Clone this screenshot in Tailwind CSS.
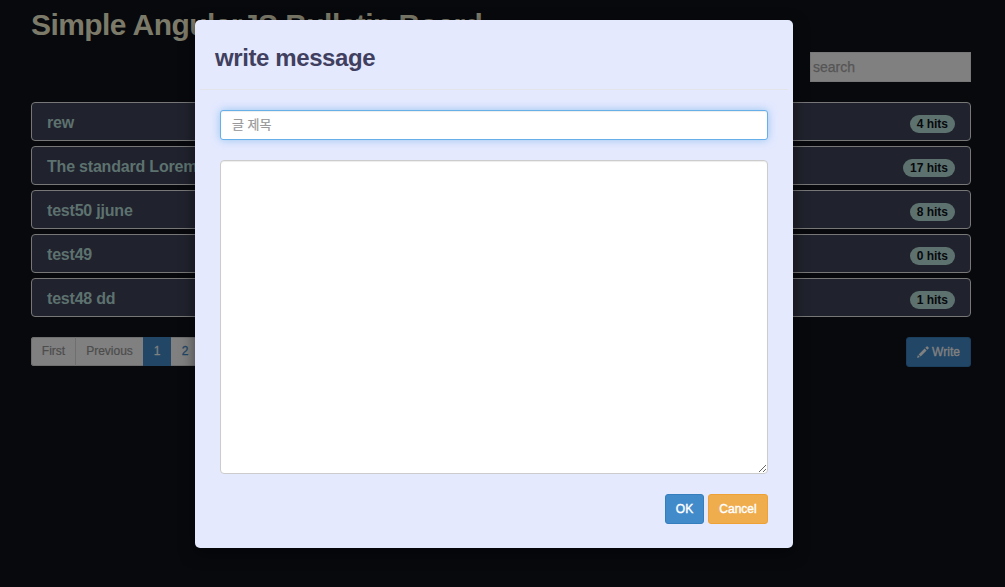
<!DOCTYPE html>
<html lang="en">
<head>
<meta charset="utf-8">
<title>Simple AngularJS Bulletin Board</title>
<script src="https://cdn.jsdelivr.net/npm/@tailwindcss/browser@4"></script>
</head>
<body class="relative h-[587px] overflow-hidden bg-[#07090d] font-['Liberation_Sans','Noto_Sans_CJK_KR',sans-serif]">
<main class="flex flex-col pl-[31px] pr-[34px] pt-2">
  <h1 class="h-11 text-[30px] leading-[34px] font-bold tracking-[-0.57px] text-[#7c7a69] whitespace-nowrap">Simple AngularJS Bulletin Board</h1>
  <div class="flex justify-end">
    <input class="h-[30px] w-[161px] border border-[#777] bg-[#808080] px-0.5 text-sm placeholder:text-[#555] [-webkit-text-stroke:0.25px_#555]" placeholder="search">
  </div>
  <ul class="mt-5 flex flex-col gap-[5px] text-base font-bold tracking-[-0.2px] text-[#5d726f]">
    <li class="flex h-[39px] items-center justify-between rounded border border-[#777] bg-[#20222d] px-[15px]"><span class="pt-0.5">rew</span><span class="mt-1 h-[18px] rounded-full bg-[#5d726f] px-[7px] text-xs leading-[18px] tracking-normal text-[#07090d]">4 hits</span></li>
    <li class="flex h-[39px] items-center justify-between rounded border border-[#777] bg-[#20222d] px-[15px]"><span class="pt-0.5">The standard Lorem Ipsum</span><span class="mt-1 h-[18px] rounded-full bg-[#5d726f] px-[7px] text-xs leading-[18px] tracking-normal text-[#07090d]">17 hits</span></li>
    <li class="flex h-[39px] items-center justify-between rounded border border-[#777] bg-[#20222d] px-[15px]"><span class="pt-0.5">test50 jjune</span><span class="mt-1 h-[18px] rounded-full bg-[#5d726f] px-[7px] text-xs leading-[18px] tracking-normal text-[#07090d]">8 hits</span></li>
    <li class="flex h-[39px] items-center justify-between rounded border border-[#777] bg-[#20222d] px-[15px]"><span class="pt-0.5">test49</span><span class="mt-1 h-[18px] rounded-full bg-[#5d726f] px-[7px] text-xs leading-[18px] tracking-normal text-[#07090d]">0 hits</span></li>
    <li class="flex h-[39px] items-center justify-between rounded border border-[#777] bg-[#20222d] px-[15px]"><span class="pt-0.5">test48 dd</span><span class="mt-1 h-[18px] rounded-full bg-[#5d726f] px-[7px] text-xs leading-[18px] tracking-normal text-[#07090d]">1 hits</span></li>
  </ul>
  <div class="mt-5 flex items-start justify-between text-xs">
    <nav class="flex h-[29px] rounded-[3px] bg-[#808080] text-center leading-[28px] text-[#4c4c4c]">
      <span class="w-[45px] rounded-l-[3px] border border-[#6f6f6f] leading-[26px] [-webkit-text-stroke:0.2px_#4c4c4c]">First</span>
      <span class="w-[67px] border-y border-[#6f6f6f] leading-[26px] [-webkit-text-stroke:0.2px_#4c4c4c]">Previous</span>
      <span class="w-7 bg-[#214666] text-[#808080] [-webkit-text-stroke:0.3px_#808080]">1</span>
      <span class="w-7 border-y border-[#6f6f6f] leading-[26px] text-[#214666] [-webkit-text-stroke:0.3px_#214666]">2</span>
    </nav>
    <button class="flex h-[30px] w-[65px] items-center justify-center gap-[3px] rounded-[3px] border border-[#1b3f5d] bg-[#214666] text-[#808080]">
      <svg class="size-3" viewBox="0 0 12 12" fill="currentColor"><path d="M0 12l.9-2.9 2 2zM1.6 8.4l6-6 2 2-6 6zM8.3 1.7L9.6.4q.5-.5 1 0l1 1q.5.5 0 1L10.3 3.7z"/></svg>
      <span class="[-webkit-text-stroke:0.4px_#808080]">Write</span>
    </button>
  </div>
</main>
<section class="absolute left-[195px] top-5 flex h-[528px] w-[598px] flex-col rounded-[5px] bg-[#e4e9fe] shadow-[0_5px_15px_rgba(0,0,0,0.5)]">
  <header class="mx-[5px] h-[70px] border-b border-[#e2e4ea] pl-[15px] pt-[21px]">
    <h2 class="text-2xl leading-[34px] font-bold tracking-[-0.4px] text-[#403f5f]">write message</h2>
  </header>
  <div class="flex flex-col gap-5 px-[25px] pt-5">
    <input class="h-[30px] w-full rounded-[3px] border border-[#66afe9] bg-white px-[11px] pb-0.5 text-[13px] shadow-[inset_0_1px_1px_rgba(0,0,0,0.075),0_0_8px_rgba(102,175,233,0.6)] outline-none placeholder:text-[#999] [-webkit-text-stroke:0.2px_#999]" placeholder="글 제목">
    <textarea class="block h-[314px] w-full resize rounded border border-[#ccc] bg-white p-2 shadow-[inset_0_1px_1px_rgba(0,0,0,0.075)]"></textarea>
    <div class="flex justify-end gap-1 text-xs text-white">
      <button class="h-[30px] w-[39px] rounded-[3px] border border-[#357ebd] bg-[#428bca] [-webkit-text-stroke:0.4px_white]">OK</button>
      <button class="h-[30px] w-[60px] rounded-[3px] border border-[#eea236] bg-[#f0ad4e] [-webkit-text-stroke:0.4px_white]">Cancel</button>
    </div>
  </div>
</section>
</body>
</html>
